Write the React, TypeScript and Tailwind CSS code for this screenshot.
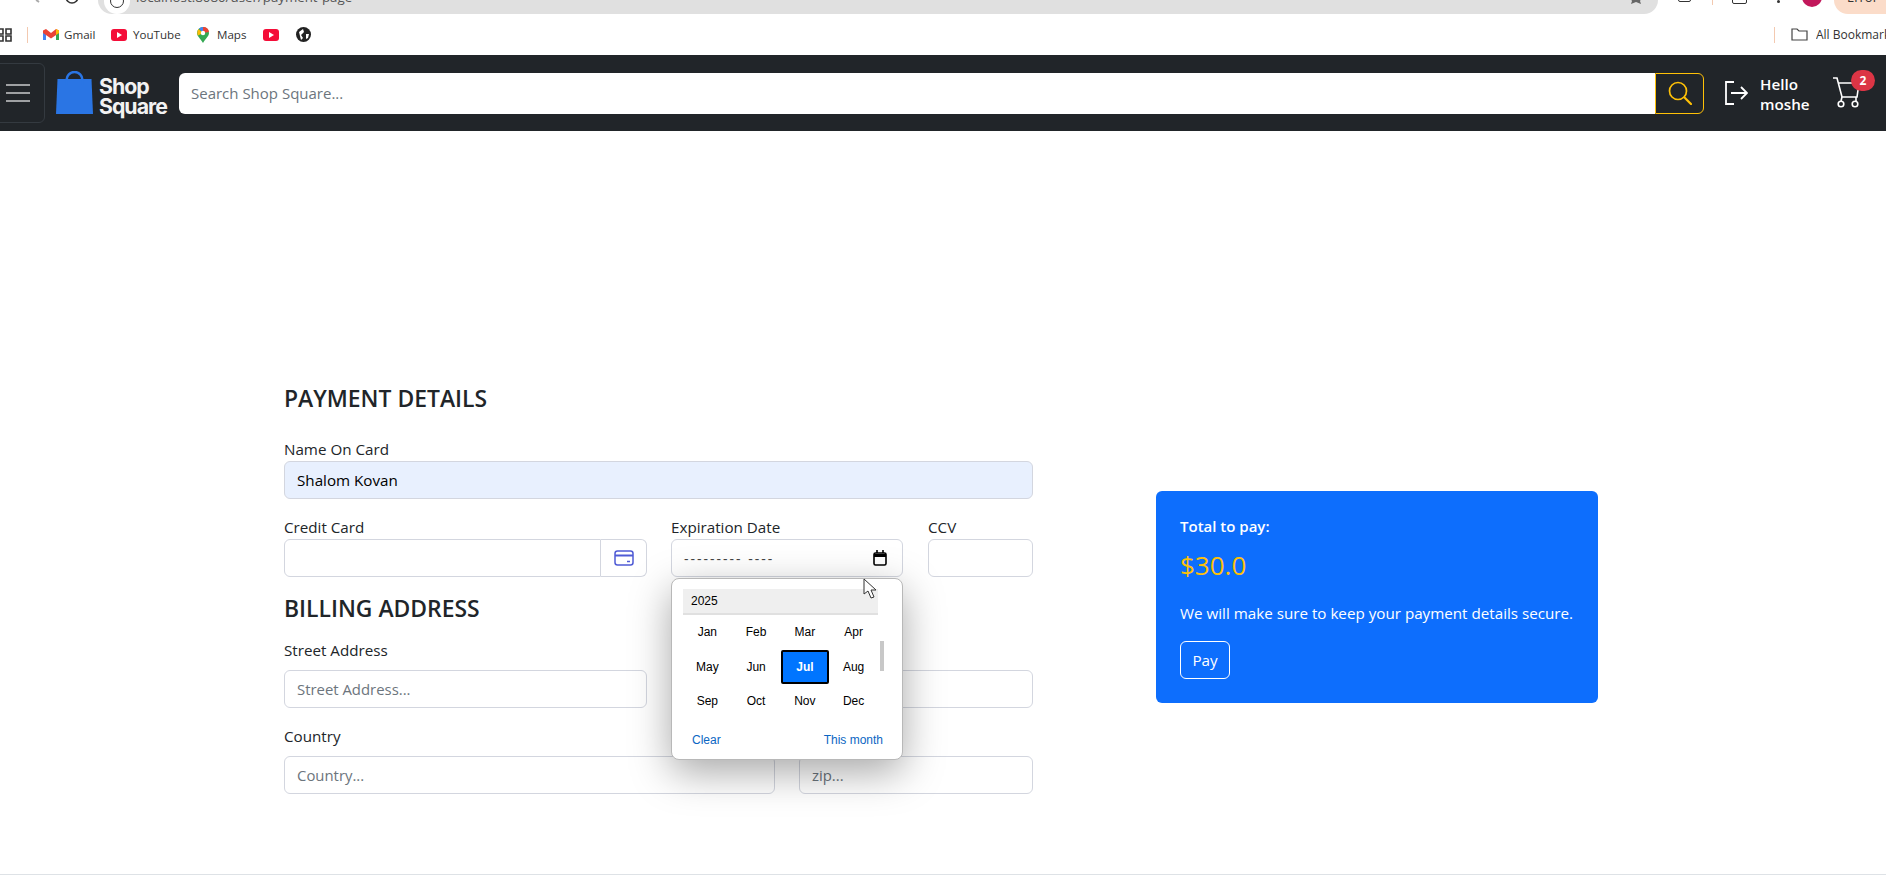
import React from "react";

const field = "h-[38px] w-full rounded-[6px] border border-[#d3d6df] px-3 text-[15.2px] text-[#212529] placeholder:text-[#6c757d] placeholder:text-[14.9px] outline-none";
const label = "block h-[24px] text-[15.2px] leading-[24px] text-[#212529]";

function Chrome() {
  return (
    <div className="bg-white">
      <div className="flex h-[14px] items-start overflow-hidden">
        <svg width="98" height="14" viewBox="0 0 98 14" className="shrink-0" fill="none" stroke="#333" strokeWidth="1.6">
          <path d="M36 0l3 2-3 -3" stroke="#aaa" />
          <circle cx="72" cy="-3" r="6" />
        </svg>
        <div className="relative flex h-[14px] w-[1560px] shrink-0 items-end rounded-b-[14px] bg-[#e0e0e0] pl-[38px]">
          <span className="absolute left-[6px] top-[-12px] flex h-[26px] w-[26px] items-center justify-center rounded-full bg-white">
            <span className="h-[14px] w-[14px] rounded-full border-[1.5px] border-[#333]" />
          </span>
          <span className="mb-[10px] whitespace-nowrap font-['Open_Sans',sans-serif] text-[13.3px] leading-[14px] text-[#555]">localhost:8080/user/payment-page</span>
          <svg width="14" height="8" viewBox="0 0 14 8" className="absolute right-[15px] top-[-4px]"><path d="M0 0h14l-3 5 1 3-5-2-5 2 1-3z" fill="#666" /></svg>
        </div>
        <div className="relative h-[14px] flex-1">
          <span className="absolute left-[20px] top-[-8px] h-[10px] w-[13px] rounded-[2px] border-[1.5px] border-[#333]" />
          <span className="absolute left-[54px] top-0 h-[5px] w-px bg-[#f3c9b0]" />
          <span className="absolute left-[74px] top-[-8px] h-[12px] w-[15px] rounded-[2px] border-[1.5px] border-[#333]" />
          <span className="absolute left-[119px] top-0 h-[3px] w-[3px] rounded-full bg-[#333]" />
          <span className="absolute left-[144px] top-[-13px] h-[20px] w-[20px] rounded-full bg-[#c2185b]" />
          <span className="absolute left-[176px] top-[-14px] flex h-[28px] w-[70px] items-end rounded-l-[14px] bg-[#fbdcc9] pb-[9px] pl-[13px] font-['Open_Sans',sans-serif] text-[13px] leading-[16px] text-[#333]">Error</span>
        </div>
      </div>
      <div className="flex h-[41px] items-center font-['Open_Sans',sans-serif] text-[11.6px] text-[#333]">
        <svg width="12" height="14" viewBox="0 0 12 14" fill="none" stroke="#333" strokeWidth="1.6" className="shrink-0">
          <path d="M-3 1h6v5h-6zM6 1h5v5H6zM-3 8h6v5h-6zM6 8h5v5H6z" />
        </svg>
        <span className="ml-[15px] h-[16px] w-px bg-[#f3c9b0]" />
        <svg width="16" height="12" viewBox="0 0 16 12" className="ml-[15px]">
          <path d="M0 2v9h3V5z" fill="#4285f4" /><path d="M16 2v9h-3V5z" fill="#34a853" />
          <path d="M0 1.5 3 0l5 4 5-4 3 1.5V4l-8 5.5L0 4z" fill="#ea4335" /><path d="M13 0l3 1.500V4l-3 2z" fill="#fbbc04" />
        </svg>
        <span className="ml-[5px] w-[31px] whitespace-nowrap">Gmail</span>
        <svg width="16" height="12" viewBox="0 0 16 12" className="ml-[16px]"><rect width="16" height="12" rx="3" fill="#f40d38" /><path d="M6 3l5 3-5 3z" fill="#fff" /></svg>
        <span className="ml-[6px] w-[45px] whitespace-nowrap">YouTube</span>
        <svg width="12" height="16" viewBox="0 0 12 16" className="ml-[19px]">
          <path d="M6 0a6 6 0 0 1 6 6c0 3-3 5-6 10C3 11 0 9 0 6a6 6 0 0 1 6-6z" fill="#34a853" />
          <path d="M1.500 2 6 6 1 8.500C0 7 0 4 1.500 2z" fill="#fbbc04" /><path d="M2 1.500A6 6 0 0 1 6 0v6z" fill="#4285f4" />
          <path d="M6 0a6 6 0 0 1 6 5l-6 1z" fill="#ea4335" /><circle cx="6" cy="6" r="2.200" fill="#fff" />
        </svg>
        <span className="ml-[8px] w-[29px] whitespace-nowrap">Maps</span>
        <svg width="16" height="12" viewBox="0 0 16 12" className="ml-[17px]"><rect width="16" height="12" rx="3" fill="#f40d38" /><path d="M6 3l5 3-5 3z" fill="#fff" /></svg>
        <svg width="15" height="15" viewBox="0 0 15 15" className="ml-[17px]">
          <circle cx="7.500" cy="7.500" r="7.500" fill="#222" />
          <path d="M3 5l4-3 1 3-3 3 2 3-2 2zM10 7l3 0-1 4-2 1z" fill="#fff" />
        </svg>
        <span className="ml-auto h-[16px] w-px bg-[#f3c9b0]" />
        <svg width="17" height="13" viewBox="0 0 17 13" fill="none" stroke="#444" strokeWidth="1.2" className="ml-[16px]"><path d="M1 12V1h5l2 2h8v9z" /></svg>
        <span className="ml-[8px] w-[70px] overflow-hidden whitespace-nowrap text-[12px]">All Bookmarks</span>
      </div>
    </div>
  );
}

function Nav() {
  return (
    <nav className="flex h-[76px] items-center bg-[#212529]">
      <button className="ml-[-20px] flex h-[60px] w-[65px] items-center justify-end rounded-[6px] border border-[#343a40] pr-[14px]">
        <svg width="24" height="20" viewBox="0 0 24 20" stroke="#c9cacb" strokeWidth="1.700"><path d="M0 2h24M0 10h24M0 18h24" /></svg>
      </button>
      <svg width="37" height="44" viewBox="0 0 37 44" className="ml-[11px] shrink-0">
        <path d="M1.500 8h34l1.500 35H0z" fill="#2a75e4" />
        <path d="M10.500 14V9a8 8 0 0 1 16 0v5" fill="none" stroke="#2a75e4" strokeWidth="2.500" />
      </svg>
      <div className="ml-[6px] mt-[5px] w-[74px] font-['Inter',sans-serif] text-[21.3px] font-bold leading-[20px] tracking-[-1px] text-[#f2f2f2]">Shop<br />Square</div>
      <div className="ml-[6px] flex h-[41px] flex-1">
        <input placeholder="Search Shop Square..." className="h-full flex-1 rounded-l-[6px] bg-white px-3 text-[15px] text-[#212529] placeholder:text-[#6c757d] outline-none" />
        <button className="flex h-full w-[49px] items-center justify-center rounded-r-[6px] border border-[#ffc107]">
          <svg width="24" height="24" viewBox="0 0 24 24" fill="none" stroke="#ffc107" strokeWidth="1.700" strokeLinecap="round"><circle cx="10" cy="10" r="8.500" /><path d="M16.500 16.500 23 23" strokeWidth="2.200" /></svg>
        </button>
      </div>
      <svg width="23" height="24" viewBox="0 0 23 24" fill="none" stroke="#fff" strokeWidth="1.800" className="ml-[21px] shrink-0">
        <path d="M9 1H1v22h8M6 12h16M16 6l6 6-6 6" />
      </svg>
      <div className="ml-[12px] mt-[1px] w-[73px] text-[15.2px] font-semibold leading-[20px] text-white">Hello<br />moshe</div>
      <div className="relative mr-[26px] h-[32px] w-[27px]">
        <svg width="28" height="32" viewBox="0 0 28 32" fill="none" stroke="#fff" strokeWidth="1.600">
          <path d="M0 1h4l5 19h15l2-14H5" /><circle cx="8" cy="27" r="2.800" /><circle cx="22" cy="27" r="2.800" /><path d="M9 20l-1 4M23 20l0 4" />
        </svg>
        <span className="absolute left-[18px] top-[-7px] flex h-[21px] w-[24px] items-center justify-center rounded-full bg-[#dc3545] text-[12px] font-bold text-white">2</span>
      </div>
    </nav>
  );
}

function Popup() {
  const months = ["Jan", "Feb", "Mar", "Apr", "May", "Jun", "Jul", "Aug", "Sep", "Oct", "Nov", "Dec"];
  return (
    <div className="absolute left-0 top-[63px] z-10 h-[182px] w-[232px] rounded-[8px] border border-[#b8b8b8] bg-white shadow-[0_12px_40px_rgba(0,0,0,0.35)] font-['Liberation_Sans',sans-serif] text-[12px] text-black">
      <div className="ml-[11px] mt-[10px] h-[26px] w-[195px] border-b-2 border-[#e0e0e0] bg-[#efefef] pl-[8px] leading-[25px]">2025</div>
      <div className="ml-[11px] grid w-[195px] grid-cols-4 gap-y-[0.5px]">
        {months.map((m) =>
          <div key={m} className={m === "Jul" ? "flex h-[34px] items-center justify-center rounded-[2px] border-2 border-black bg-[#0075ff] font-bold text-white" : "flex h-[34px] items-center justify-center"}>{m}</div>
        )}
      </div>
      <div className="mt-[15px] flex w-[211px] justify-between pl-[20px] leading-[14px] text-[#0b66c3]"><span>Clear</span><span>This month</span></div>
      <span className="absolute left-[208px] top-[62px] h-[30px] w-[4px] bg-[#c8c8c8]" />
    </div>
  );
}

export default function App() {
  return (
    <div className="relative h-[875px] overflow-hidden bg-white font-['Open_Sans',sans-serif]">
      <Chrome />
      <Nav />
      <main className="ml-[284px] flex items-start">
        <form className="w-[749px] pt-[252px]">
          <h2 className="mb-[22px] h-[32px] text-[22.9px] font-semibold leading-[32px] text-[#212529]">PAYMENT DETAILS</h2>
          <label className={label}>Name On Card</label>
          <input defaultValue="Shalom Kovan" className={field + " bg-[#e8f0fe] text-black"} />
          <div className="mt-[16px] flex gap-[24px]">
            <div className="w-[363px]">
              <label className={label}>Credit Card</label>
              <div className="flex">
                <input className={field + " rounded-r-none"} />
                <span className="flex h-[38px] w-[46px] shrink-0 items-center justify-center rounded-r-[6px] border border-l-0 border-[#d3d6df]">
                  <svg width="20" height="16" viewBox="0 0 20 16" fill="none" stroke="#4f5bd5" strokeWidth="1.500"><rect x="1" y="1" width="18" height="14" rx="2.500" /><path d="M1 5.500h18" strokeWidth="2" /><path d="M13 11.500h3" /></svg>
                </span>
              </div>
            </div>
            <div className="relative w-[232px]">
              <label className={label}>Expiration Date</label>
              <div className={field + " flex items-center justify-between pr-[15px]"}>
                <span className="text-[14px] tracking-[2px] text-[#444]">--------- ----</span>
                <svg width="14" height="16" viewBox="0 0 14 16" fill="none" stroke="#000" strokeWidth="1.600"><rect x="1" y="3" width="12" height="12" rx="1.500" /><path d="M1 5.500h12" strokeWidth="3" /><path d="M4 0v3M10 0v3" /></svg>
              </div>
              <Popup />
              <svg width="14" height="21" viewBox="0 0 14 21" className="absolute left-[192px] top-[63px] z-20" fill="#fff" stroke="#333" strokeWidth="1"><path d="M1 1v15l4-3 3 7 3-1-3-7h5z" /></svg>
            </div>
            <div className="ml-[1px] flex-1">
              <label className={label}>CCV</label>
              <input className={field} />
            </div>
          </div>
          <h2 className="mb-[13px] mt-[16px] h-[32px] text-[22.9px] font-semibold leading-[32px] text-[#212529]">BILLING ADDRESS</h2>
          <div className="flex gap-[24px]">
            <div className="w-[363px]">
              <label className={label + " mb-[8px]"}>Street Address</label>
              <input placeholder="Street Address..." className={field} />
            </div>
            <div className="flex-1">
              <label className={label + " mb-[8px]"}>City</label>
              <input className={field} />
            </div>
          </div>
          <div className="mt-[16px] flex gap-[24px]">
            <div className="w-[491px]">
              <label className={label + " mb-[8px]"}>Country</label>
              <input placeholder="Country..." className={field} />
            </div>
            <div className="flex-1">
              <label className={label + " mb-[8px]"}>Zip</label>
              <input placeholder="zip..." className={field} />
            </div>
          </div>
        </form>
        <aside className="ml-[123px] mt-[360px] h-[212px] w-[442px] rounded-[6px] bg-[#0d6efd] px-[24px] pt-[23px] text-white">
          <div className="text-[15px] font-semibold leading-[24px]">Total to pay:</div>
          <div className="mt-[9px] text-[26px] leading-[36px] text-[#ffc107]">$30.0</div>
          <p className="mt-[18px] whitespace-nowrap text-[15.2px] leading-[24px]">We will make sure to keep your payment details secure.</p>
          <button className="mt-[16px] h-[38px] w-[50px] rounded-[6px] border border-white text-[15.2px]">Pay</button>
        </aside>
      </main>
      <div className="absolute inset-x-0 bottom-0 h-px bg-[#dee2e6]" />
    </div>
  );
}
